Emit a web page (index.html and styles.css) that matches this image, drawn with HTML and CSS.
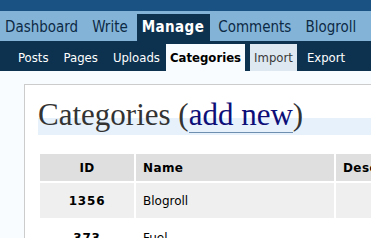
FILE: index.html
```html
<!DOCTYPE html>
<html lang="en">
<head>
    <meta charset="UTF-8">
    <title>Categories &lsaquo; Manage</title>
    <link rel="stylesheet" href="styles.css">
</head>
<body>
    <div id="wphead"></div>

    <ul id="adminmenu">
        <li><a href="#">Dashboard</a></li>
        <li><a href="#">Write</a></li>
        <li><a href="#" class="current">Manage</a></li>
        <li><a href="#">Comments</a></li>
        <li><a href="#">Blogroll</a></li>
    </ul>

    <ul id="submenu">
        <li><a href="#">Posts</a></li>
        <li><a href="#">Pages</a></li>
        <li><a href="#">Uploads</a></li>
        <li><a href="#" class="current">Categories</a></li>
        <li><a href="#" class="hover">Import</a></li>
        <li><a href="#">Export</a></li>
    </ul>

    <div class="wrap">
        <h2>Categories (<a href="#">add new</a>)</h2>
        <table class="widefat">
            <thead>
                <tr>
                    <th class="col-id">ID</th>
                    <th class="col-name">Name</th>
                    <th class="col-desc">Description</th>
                </tr>
            </thead>
            <tbody>
                <tr class="alternate">
                    <td class="col-id">1356</td>
                    <td>Blogroll</td>
                    <td></td>
                </tr>
                <tr>
                    <td class="col-id">373</td>
                    <td>Fuel</td>
                    <td></td>
                </tr>
            </tbody>
        </table>
    </div>
</body>
</html>
```

FILE: styles.css
```css
html {
    overflow: hidden;
}

body {
    margin: 0;
    width: 560px;
    background-color: #f9fcfe;
    font-family: "DejaVu Sans Condensed", "DejaVu Sans", sans-serif;
    color: #333;
}

#wphead {
    height: 11px;
    background-color: #1a5284;
}

#adminmenu {
    list-style: none;
    margin: 0;
    padding: 3px 0 0 0;
    height: 27px;
    background-color: #83b4d8;
    display: flex;
    gap: 3px;
    font-size: 15px;
}

#adminmenu a {
    display: block;
    height: 27px;
    line-height: 26px;
    padding: 0 6px 0 5px;
    color: #0d2a45;
    text-decoration: none;
}

#adminmenu a.current {
    background-color: #0d324f;
    color: #fff;
    font-weight: bold;
    letter-spacing: 0.4px;
}

#submenu {
    list-style: none;
    margin: 0;
    padding: 3px 0 0 11px;
    height: 27px;
    background-color: #0d324f;
    display: flex;
    gap: 1px;
    font-size: 13px;
}

#submenu a {
    display: block;
    height: 27px;
    line-height: 27px;
    padding: 0 7px;
    color: #fff;
    text-decoration: none;
}

#submenu a.current {
    background-color: #f9fcfe;
    color: #000;
    font-weight: bold;
    padding: 0 4px;
    margin-left: -2px;
}

#submenu a.hover {
    background-color: #dde8f1;
    color: #3a3a3a;
    padding: 0 4px;
    margin: 0 2px 0 4px;
}

.wrap {
    margin: 13px 0 0 24px;
    padding: 12px 0 0 13px;
    background-color: #fff;
    border: 1px solid #ccc;
    border-right: none;
}

h2 {
    margin: 0 0 17px 0;
    padding: 0 0 2px 0;
    font-family: "Liberation Serif", serif;
    font-weight: normal;
    font-size: 31px;
    line-height: 36px;
    color: #333;
    background: linear-gradient(#fff, #fff) top / 100% 21px no-repeat, #e6f1fb;
}

h2 a {
    color: #0e0e78;
    text-decoration: none;
    border-bottom: 1px solid #6f8fb0;
}

.widefat {
    border-spacing: 2px;
    width: 100%;
    font-family: "DejaVu Sans", sans-serif;
    font-size: 12px;
    color: #000;
}

.widefat th {
    height: 27px;
    padding: 0 7px;
    background-color: #dfdfdf;
    text-align: left;
    font-weight: bold;
    letter-spacing: 0.4px;
}

.widefat td {
    height: 35px;
    padding: 0 7px;
}

.widefat .col-id {
    width: 80px;
    text-align: center;
}

.widefat .col-name {
    width: 184px;
}

.widefat td.col-id {
    font-weight: bold;
    letter-spacing: 0.8px;
}

.widefat tr.alternate td {
    background-color: #efefef;
}
```
